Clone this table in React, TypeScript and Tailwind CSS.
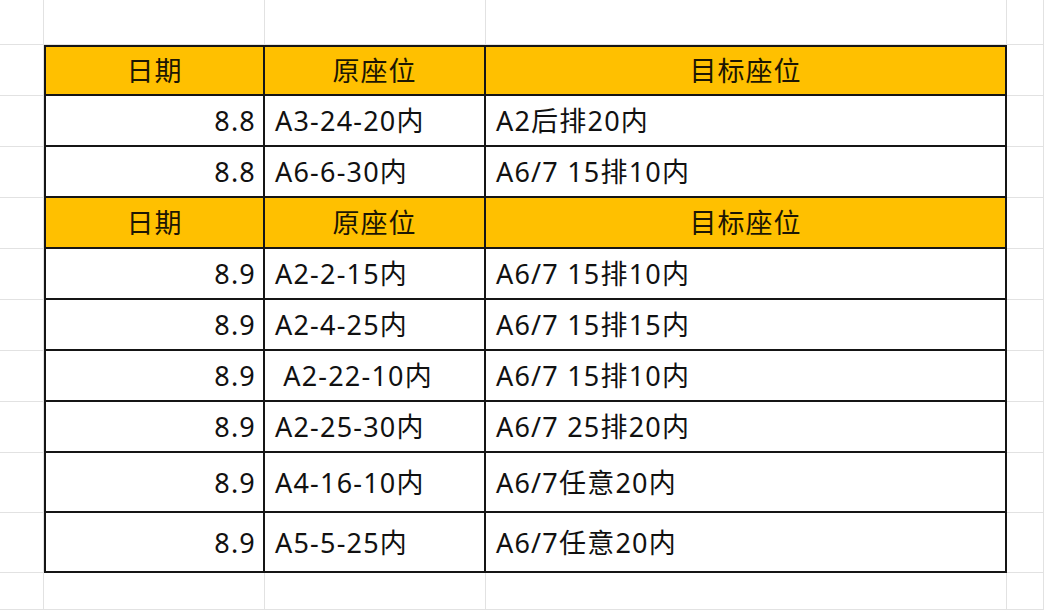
const COLS = [44, 221, 221, 521, 37];
const ROWS = [45, 51, 51, 51, 51, 51, 51, 51, 51, 60, 60, 37];

type Row = { header?: boolean; cells: [string, string, string] };

const TABLE: Row[] = [
  { header: true, cells: ["日期", "原座位", "目标座位"] },
  { cells: ["8.8", "A3-24-20内", "A2后排20内"] },
  { cells: ["8.8", "A6-6-30内", "A6/7 15排10内"] },
  { header: true, cells: ["日期", "原座位", "目标座位"] },
  { cells: ["8.9", "A2-2-15内", "A6/7 15排10内"] },
  { cells: ["8.9", "A2-4-25内", "A6/7 15排15内"] },
  { cells: ["8.9", "\u00a0A2-22-10内", "A6/7 15排10内"] },
  { cells: ["8.9", "A2-25-30内", "A6/7 25排20内"] },
  { cells: ["8.9", "A4-16-10内", "A6/7任意20内"] },
  { cells: ["8.9", "A5-5-25内", "A6/7任意20内"] },
];

function SheetCell({ r, c }: { r: number; c: number }) {
  const inTable = r >= 1 && r <= TABLE.length && c >= 1 && c <= 3;
  if (!inTable) {
    return <div className="border-r border-b border-[#e2e2e2]" />;
  }
  const row = TABLE[r - 1];
  const text = row.cells[c - 1];
  const edges = `${c === 1 ? "border-l-2" : ""} ${r === 1 ? "border-t-2" : ""}`;
  if (row.header) {
    return (
      <div
        className={`flex items-center justify-center pt-[2px] border-r-2 border-b-2 border-[#151515] bg-[#ffc000] text-[27px] tracking-[1px] text-[#1c1603] ${edges}`}
      >
        {text}
      </div>
    );
  }
  return (
    <div
      className={`flex items-center pt-[2px] border-r-2 border-b-2 border-[#151515] bg-white text-[27px] tracking-[1.2px] text-[#111] whitespace-pre ${edges} ${
        c === 1 ? "justify-end pr-[7px] tracking-[0.5px]" : "justify-start pl-2.5"
      }`}
    >
      {text}
    </div>
  );
}

export default function App() {
  return (
    <div
      className="grid w-[1044px] h-[610px] overflow-hidden bg-white"
      style={{
        gridTemplateColumns: COLS.map((w) => `${w}px`).join(" "),
        gridTemplateRows: ROWS.map((h) => `${h}px`).join(" "),
        fontFamily: '"Noto Sans", "Noto Sans CJK SC", sans-serif',
      }}
    >
      {ROWS.map((_, r) =>
        COLS.map((_, c) => <SheetCell key={`${r}-${c}`} r={r} c={c} />)
      )}
    </div>
  );
}
